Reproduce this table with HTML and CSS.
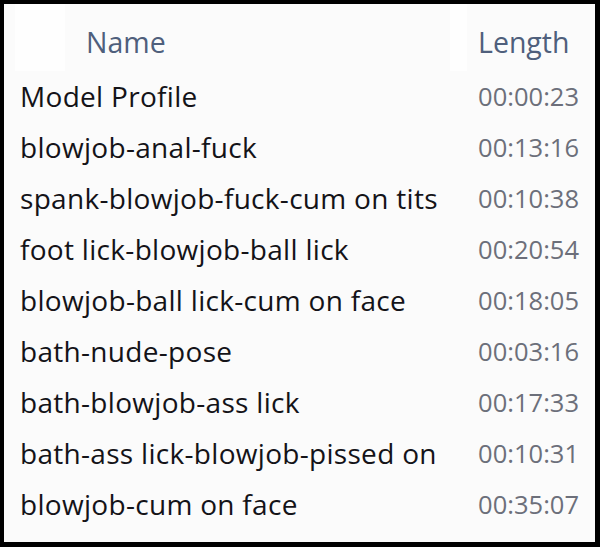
FILE: index.html
```html
<!DOCTYPE html>
<html>
<head>
<meta charset="utf-8">
<link rel="stylesheet" href="styles.css">
</head>
<body>
<div class="frame">
  <div class="list">
    <div class="head">
      <div class="hcell hname"><span>Name</span></div>
      <div class="hcell hlen"><span>Length</span></div>
    </div>
    <div class="row"><span class="name">Model Profile</span><span class="len">00:00:23</span></div>
    <div class="row"><span class="name">blowjob-anal-fuck</span><span class="len">00:13:16</span></div>
    <div class="row"><span class="name">spank-blowjob-fuck-cum on tits</span><span class="len">00:10:38</span></div>
    <div class="row"><span class="name">foot lick-blowjob-ball lick</span><span class="len">00:20:54</span></div>
    <div class="row"><span class="name">blowjob-ball lick-cum on face</span><span class="len">00:18:05</span></div>
    <div class="row"><span class="name">bath-nude-pose</span><span class="len">00:03:16</span></div>
    <div class="row"><span class="name">bath-blowjob-ass lick</span><span class="len">00:17:33</span></div>
    <div class="row"><span class="name">bath-ass lick-blowjob-pissed on</span><span class="len">00:10:31</span></div>
    <div class="row"><span class="name">blowjob-cum on face</span><span class="len">00:35:07</span></div>
  </div>
</div>
</body>
</html>
```
FILE: styles.css
```css
html, body {
  margin: 0;
  padding: 0;
  background: #000;
}
body {
  width: 600px;
  height: 547px;
  padding: 4px 5px 5px 4px;
  box-sizing: border-box;
}
.frame {
  background: #fbfbfb;
  height: 100%;
  overflow: hidden;
}
.list {
  font-family: "Open Sans", "Noto Sans", sans-serif;
  font-size: 28px;
}
.head {
  display: grid;
  grid-template-columns: 1fr 145px;
  height: 67px;
  font-size: 28.5px;
  color: #4f5f7c;
}
.hcell {
  display: flex;
  align-items: center;
  padding-top: 8px;
}
.hname {
  padding-left: 82px;
  background: linear-gradient(to right, #fbfbfb 0, #fbfbfb 11px, #fefefe 11px, #fefefe 61px, #fbfbfb 61px);
}
.hlen {
  padding-left: 28px;
  background: linear-gradient(to right, #fefefe 0, #fefefe 17px, #fbfbfb 17px);
}
.row {
  display: flex;
  justify-content: space-between;
  align-items: center;
  height: 51px;
  margin-top: -1px;
  margin-bottom: 1px;
  padding: 0 16px 0 16px;
}
.name {
  color: #141318;
  letter-spacing: 0.3px;
}
.len {
  font-size: 25.5px;
  color: #6c6f7a;
}
```
